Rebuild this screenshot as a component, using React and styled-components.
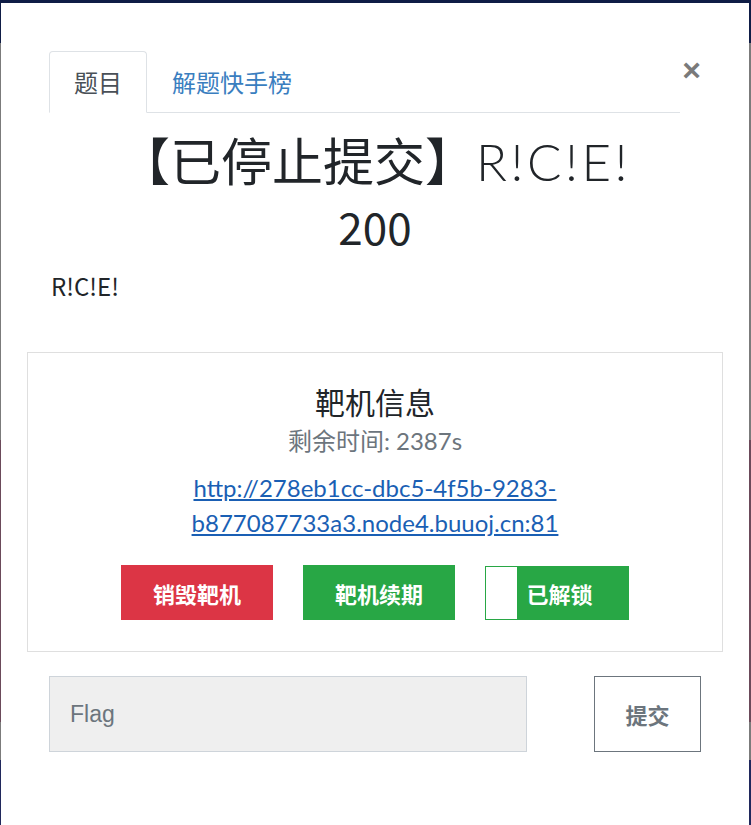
import styled, { createGlobalStyle } from "styled-components";

const Global = createGlobalStyle`
  html, body { margin: 0; padding: 0; overflow: hidden; }
  body {
    font-family: Lato, "Noto Sans CJK SC", sans-serif;
    color: #212529;
    background: linear-gradient(180deg,
      #0f1d46 0 43px, #7b7b7b 43px 440px, #6b4a5a 440px 722px,
      #7b7b7b 722px 760px, #20285c 760px);
  }
`;

const Backdrop = styled.div`
  padding: 3px 2px 0 1px;
  height: 825px;
  box-sizing: border-box;
`;

const Modal = styled.div`
  background: #fff;
  height: 100%;
  padding: 0 26px;
  box-sizing: border-box;
  display: flex;
  flex-direction: column;
`;

const Header = styled.div`
  display: flex;
  align-items: flex-start;
  padding: 48px 22px 0;
`;

const Tabs = styled.div`
  flex: 1;
  display: flex;
  border-bottom: 1px solid #dee2e6;
`;

const Tab = styled.div`
  padding: 12px 24px;
  margin-bottom: -1px;
  font-family: "Noto Sans CJK SC", sans-serif;
  font-size: 24px;
  line-height: 36px;
  color: ${(p) => (p.$active ? "#495057" : "#3a7ebf")};
  background: ${(p) => (p.$active ? "#fff" : "transparent")};
  border: 1px solid ${(p) => (p.$active ? "#dee2e6" : "transparent")};
  border-bottom-color: ${(p) => (p.$active ? "#fff" : "transparent")};
  border-radius: 4px 4px 0 0;
`;

const Close = styled.button`
  width: 21px;
  margin-top: 5px;
  padding: 0;
  border: none;
  background: none;
  font-family: "Liberation Sans", sans-serif;
  font-size: 32px;
  font-weight: 700;
  line-height: 28px;
  color: #7a7a7a;
  text-align: right;
`;

const Title = styled.h3`
  margin: 13px 0 0;
  text-align: center;
  font-family: "Noto Sans CJK SC", sans-serif;
  font-weight: 400;
  font-size: 51px;
  line-height: 66px;
  color: #212529;
`;

const Latin = styled.span`
  font-family: Lato, sans-serif;
  font-weight: 300;
  letter-spacing: 3.5px;
`;

const Score = styled.div`
  font-size: 44px;
  line-height: 62px;
`;

const Desc = styled.p`
  margin: 14px 0 0 24px;
  font-family: "Noto Sans CJK SC", sans-serif;
  font-size: 24px;
  line-height: 30px;
`;

const Box = styled.div`
  margin-top: 51px;
  border: 1px solid #dfdfdf;
  padding: 28px 0 31px;
  display: flex;
  flex-direction: column;
  align-items: center;
`;

const BoxTitle = styled.div`
  font-family: "Noto Sans CJK SC", sans-serif;
  font-size: 30px;
  line-height: 40px;
`;

const Remain = styled.div`
  font-size: 24px;
  line-height: 40px;
  color: #6c757d;
`;

const Link = styled.a`
  display: block;
  margin-top: 9px;
  text-align: center;
  font-size: 24px;
  line-height: 35px;
  color: #1a5fb4;
`;

const Actions = styled.div`
  display: flex;
  gap: 30px;
  margin-top: 25px;
`;

const Btn = styled.button`
  width: 152px;
  height: 55px;
  border: none;
  padding: 0;
  font-family: "Noto Sans CJK SC", sans-serif;
  font-size: 22px;
  font-weight: 700;
  color: #fff;
  background: ${(p) => p.$bg};
`;

const Toggle = styled.div`
  width: 144px;
  height: 54px;
  margin-top: 1px;
  box-sizing: border-box;
  border: 1px solid #28a745;
  background: #28a745;
  display: flex;
`;

const Handle = styled.span`
  width: 31px;
  background: #fff;
`;

const ToggleLabel = styled.span`
  flex: 1;
  display: flex;
  align-items: center;
  justify-content: center;
  padding-right: 26px;
  font-family: "Noto Sans CJK SC", sans-serif;
  font-size: 22px;
  font-weight: 700;
  color: #fff;
`;

const FlagRow = styled.div`
  display: flex;
  justify-content: space-between;
  margin: 24px 22px 0;
`;

const FlagInput = styled.input`
  width: 478px;
  height: 76px;
  box-sizing: border-box;
  padding: 0 20px;
  border: 1px solid #ced4da;
  background: #efefef;
  font-family: "Liberation Sans", sans-serif;
  font-size: 23px;
  &::placeholder { color: #6c757d; }
`;

const Submit = styled.button`
  width: 107px;
  height: 76px;
  border: 1px solid #6c757d;
  background: #fff;
  font-family: "Noto Sans CJK SC", sans-serif;
  font-size: 22px;
  font-weight: 700;
  color: #6c757d;
`;

export default function App() {
  return (
    <Backdrop>
      <Global />
      <Modal>
        <Header>
          <Tabs>
            <Tab $active>题目</Tab>
            <Tab>解题快手榜</Tab>
          </Tabs>
          <Close>×</Close>
        </Header>

        <Title>
          <div>【已停止提交】<Latin>R!C!E!</Latin></div>
          <Score>200</Score>
        </Title>
        <Desc>R!C!E!</Desc>

        <Box>
          <BoxTitle>靶机信息</BoxTitle>
          <Remain>剩余时间: 2387s</Remain>
          <Link href="#">http://278eb1cc-dbc5-4f5b-9283-b877087733a3.node4.buuoj.cn:81</Link>
          <Actions>
            <Btn $bg="#dc3545">销毁靶机</Btn>
            <Btn $bg="#28a745">靶机续期</Btn>
            <Toggle>
              <Handle />
              <ToggleLabel>已解锁</ToggleLabel>
            </Toggle>
          </Actions>
        </Box>

        <FlagRow>
          <FlagInput placeholder="Flag" />
          <Submit>提交</Submit>
        </FlagRow>
      </Modal>
    </Backdrop>
  );
}
